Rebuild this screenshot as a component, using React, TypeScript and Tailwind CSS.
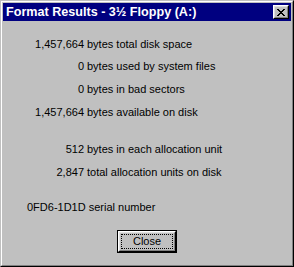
import React from 'react';

const stats = [
  { value: '1,457,664', label: 'bytes total disk space', gap: 'mt-[17px]' },
  { value: '0', label: 'bytes used by system files', gap: 'mt-[9px]' },
  { value: '0', label: 'bytes in bad sectors', gap: 'mt-[10px]' },
  { value: '1,457,664', label: 'bytes available on disk', gap: 'mt-[10px]' },
  { value: '512', label: 'bytes in each allocation unit', gap: 'mt-[24px]' },
  { value: '2,847', label: 'total allocation units on disk', gap: 'mt-[10px]' },
];

function CloseGlyph() {
  // 8x7 pixel X, like the classic caption button
  const rows = [
    'XX....XX',
    '.XX..XX.',
    '..XXXX..',
    '...XX...',
    '..XXXX..',
    '.XX..XX.',
    'XX....XX',
  ];
  return (
    <svg width="8" height="7" viewBox="0 0 8 7" shapeRendering="crispEdges">
      {rows.map((row, y) =>
        row.split('').map((c, x) =>
          c === 'X' ? <rect key={`${x}-${y}`} x={x} y={y} width="1" height="1" fill="#000" /> : null
        )
      )}
    </svg>
  );
}

export default function App() {
  return (
    <div
      className="w-[294px] h-[267px] bg-[#c0c0c0] border border-t-[#c0c0c0] border-l-[#c0c0c0] border-r-black border-b-black text-black"
      style={{ fontFamily: '"Liberation Sans", Arial, sans-serif' }}
    >
      <div className="h-full border border-t-white border-l-white border-r-[#808080] border-b-[#808080] p-px flex flex-col">
        {/* Title bar */}
        <div className="h-[18px] bg-[#000080] flex items-center justify-between pl-[3px] pr-[2px]">
          <span className="text-white font-bold text-[12.6px] leading-[18px] whitespace-nowrap">
            Format Results - 3½ Floppy (A:)
          </span>
          <div className="w-[16px] h-[14px] border border-t-white border-l-white border-r-black border-b-black">
            <div className="w-full h-full border border-t-[#dfdfdf] border-l-[#dfdfdf] border-r-[#808080] border-b-[#808080] bg-[#c0c0c0] flex items-center justify-center">
              <CloseGlyph />
            </div>
          </div>
        </div>

        {/* Body */}
        <div className="flex-1 flex flex-col text-[11px] leading-[13px]">
          {stats.map((s, i) => (
            <div key={i} className={`grid grid-cols-[81px_1fr] ${s.gap}`}>
              <span className="text-right">{s.value}</span>
              <span className="pl-[3px] whitespace-nowrap">{s.label}</span>
            </div>
          ))}
          <div className="mt-[22px] pl-[24px] whitespace-nowrap">0FD6-1D1D serial number</div>

          <div className="mt-[16px] flex justify-center">
            <button className="w-[60px] h-[23px] border border-black bg-[#c0c0c0] p-0">
              <div className="w-full h-full border border-t-white border-l-white border-r-black border-b-black">
                <div className="w-full h-full border border-t-[#dfdfdf] border-l-[#dfdfdf] border-r-[#808080] border-b-[#808080] p-px">
                  <div className="w-full h-full border border-dotted border-black flex items-center justify-center text-[11px] leading-none">
                    Close
                  </div>
                </div>
              </div>
            </button>
          </div>
        </div>
      </div>
    </div>
  );
}
